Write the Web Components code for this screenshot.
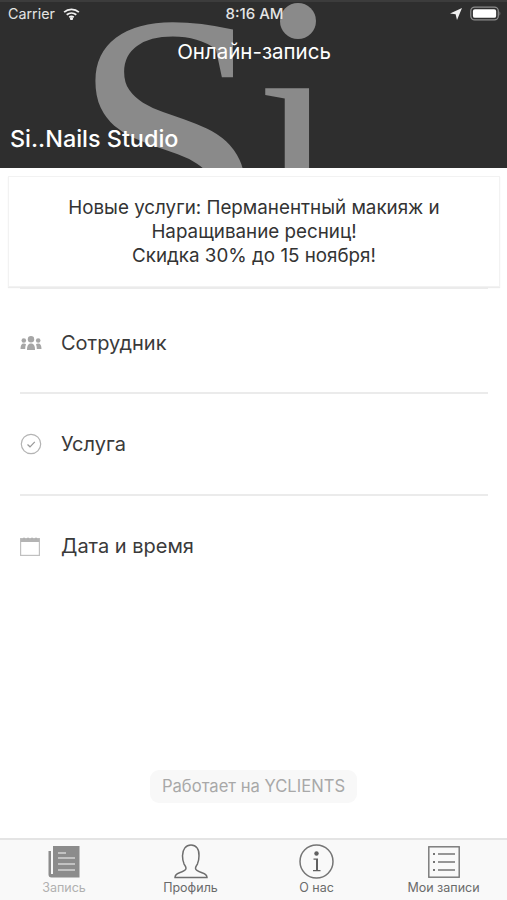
<!DOCTYPE html>
<html lang="ru">
<head>
<meta charset="utf-8">
<title>Онлайн-запись</title>
<style>
    html, body { margin: 0; padding: 0; background: #fff; }
    body { font-family: Inter, "Liberation Sans", Arial, sans-serif; }
    si-app { height: 900px; }
</style>
</head>
<body>
<si-app>
    <si-header title="Онлайн-запись" brand="Si..Nails Studio"></si-header>
    <si-notice>Новые услуги: Перманентный макияж и<br>Наращивание ресниц!<br>Скидка 30% до 15 ноября!</si-notice>
    <si-row first>
        <svg slot="icon" width="22" height="16" viewBox="0 0 22 16" fill="#a6a6a6">
            <circle cx="11" cy="4.2" r="3.2"/><path d="M7 15c0-4 1-6.500 4-6.500s4 2.500 4 6.500z"/>
            <circle cx="3.800" cy="5.500" r="2.300"/><path d="M.5 14c0-3.500 1-5.500 3.300-5.500 1 0 1.700.3 2.200.8C5.400 10.700 5.200 12.200 5.200 14z"/>
            <circle cx="18.200" cy="5.500" r="2.300"/><path d="M21.500 14c0-3.500-1-5.500-3.300-5.500-1 0-1.700.3-2.200.8.6 1.400.8 2.900.8 4.700z"/>
        </svg>
        Сотрудник
    </si-row>
    <si-row>
        <svg slot="icon" width="22" height="22" viewBox="0 0 22 22" fill="none" stroke="#b4b4b4">
            <circle cx="11" cy="11" r="9.700" stroke-width="1.200"/>
            <path d="M7.500 11.500l2.500 2.300 4.800-5" stroke="#999" stroke-width="1.200"/>
        </svg>
        Услуга
    </si-row>
    <si-row>
        <svg slot="icon" width="20" height="19" viewBox="0 0 20 19" fill="none">
            <rect x=".6" y="1.600" width="18.800" height="16.800" stroke="#c0c0c0" stroke-width="1.200"/>
            <rect x=".6" y="1.600" width="18.800" height="3.400" fill="#b4b4b4"/>
            <path d="M4 .5v2M8 .5v2M12 .5v2M16 .5v2" stroke="#a8a8a8"/>
        </svg>
        Дата и время
    </si-row>
    <si-credit>Работает на YCLIENTS</si-credit>
    <si-tab-bar>
        <si-tab label="Запись" muted>
            <svg width="32" height="33" viewBox="0 0 32 33">
                <path d="M5 1h26.500v31.500H3.500A3 3 0 0 1 .5 29.500V6H3v23h2z" fill="#8c8c8c"/>
                <path d="M10 8h8M10 13h17M10 19h17M10 25h17" stroke="#d4d4d4" stroke-width="1.500"/>
            </svg>
        </si-tab>
        <si-tab label="Профиль">
            <svg width="34" height="35" viewBox="0 0 34 35" fill="none" stroke="#6e6e6e" stroke-width="1.500">
                <path d="M1 33.500h32c0-2.500-2-3.700-5-4.700-4-1.300-6.500-2.500-6.500-4.500 0-1.500 1-2.500 2-4.500 1-2.200 1.500-5 1.500-8C25.500 5 22 1 17 1S8.500 5 8.500 11.800c0 3 .5 5.800 1.500 8 1 2 2 3 2 4.500 0 2-2.500 3.200-6.500 4.500-3 1-4.500 2.200-4.500 4.700z"/>
            </svg>
        </si-tab>
        <si-tab label="О нас">
            <svg width="35" height="35" viewBox="0 0 35 35" fill="none">
                <circle cx="17.500" cy="17.500" r="16.500" stroke="#757575" stroke-width="1.500"/>
                <circle cx="17.500" cy="9.500" r="2.200" fill="#606060"/>
                <path d="M14.500 14.500h4.500v11.500h2.500v1.200h-7.500V26H17V15.700h-2.500z" fill="#606060"/>
            </svg>
        </si-tab>
        <si-tab label="Мои записи">
            <svg width="32" height="32" viewBox="0 0 32 32" fill="none" stroke="#757575" stroke-width="1.400">
                <rect x=".8" y=".8" width="30.400" height="30.400"/>
                <path d="M10 8h17M10 16h17M10 24h17"/>
                <path d="M5 8h2M5 16h2M5 24h2" stroke-width="2"/>
            </svg>
        </si-tab>
    </si-tab-bar>
</si-app>

<script>
(function() {
    class SiApp extends HTMLElement {
        constructor() {
            super();
            this.attachShadow({ mode: 'open' }).innerHTML = `
                <style>
                    :host { display: flex; flex-direction: column; width: 507px; overflow: hidden; background: #fff; }
                </style>
                <slot></slot>`;
        }
    }

    class SiStatusBar extends HTMLElement {
        constructor() {
            super();
            this.attachShadow({ mode: 'open' }).innerHTML = `
                <style>
                    :host {
                        display: grid;
                        grid-template-columns: 1fr auto 1fr;
                        align-items: center;
                        height: 23px;
                        padding: 0 6px 0 8px;
                        color: #e4e4e4;
                        font-size: 14.300px;
                    }
                    .left, .right { display: flex; align-items: center; }
                    .left { gap: 8px; }
                    .right { justify-content: flex-end; gap: 8px; }
                    .time { font-size: 15px; font-weight: 500; }
                </style>
                <div class="left">
                    <span>Carrier</span>
                    <svg width="17" height="12" viewBox="0 0 18 13" fill="none" stroke="#f0f0f0" stroke-width="1.900">
                        <path d="M1 4.500C5.500.5 12.500.5 17 4.500M3.800 7.300c3-2.500 7.400-2.500 10.400 0M6.500 10c1.500-1 3.500-1 5 0"/>
                        <circle cx="9" cy="11.500" r=".8" fill="#f0f0f0"/>
                    </svg>
                </div>
                <span class="time">8:16 AM</span>
                <div class="right">
                    <svg width="12" height="12" viewBox="0 0 12 12"><path d="M12 0L0 5.500l5.600.8L7 12z" fill="#f0f0f0"/></svg>
                    <svg width="31" height="15" viewBox="0 0 32 15" fill="none">
                        <rect x=".8" y=".8" width="28.400" height="13.400" rx="4" stroke="#8c8c8c" stroke-width="1.300"/>
                        <rect x="3" y="3" width="24" height="9" rx="2" fill="#fff"/>
                        <path d="M30.500 5.500c1 .3 1 3.700 0 4z" fill="#8c8c8c"/>
                    </svg>
                </div>`;
        }
    }

    class SiHeader extends HTMLElement {
        constructor() {
            super();
            this.attachShadow({ mode: 'open' }).innerHTML = `
                <style>
                    :host {
                        display: flex;
                        flex-direction: column;
                        position: relative;
                        height: 168px;
                        box-sizing: border-box;
                        background: #2e2e2e;
                        color: #fff;
                        overflow: hidden;
                        border-top: 2px solid #3c3c3c;
                    }
                    .mark {
                        position: absolute;
                        font-family: "Liberation Serif", serif;
                        line-height: 1;
                        color: #8a8a8a;
                    }
                    .s { left: 72px; top: -41px; font-size: 350px; }
                    .i { left: 255px; top: -27px; font-size: 300px; }
                    /* logo dot is bigger than the font's, so it sits over a dotless i */
                    .dot { position: absolute; left: 280px; top: 1px; width: 36px; height: 36px; border-radius: 50%; background: #8a8a8a; }
                    si-status-bar, .title, .brand { position: relative; }
                    .title { margin-top: 13px; padding-left: 1px; text-align: center; font-size: 20.500px; line-height: 28px; }
                    .brand { margin: auto 0 15px 10px; font-size: 23.400px; line-height: 28px; font-weight: 500; }
                </style>
                <div class="mark s">S</div>
                <div class="mark i">ı</div>
                <div class="dot"></div>
                <si-status-bar></si-status-bar>
                <div class="title"></div>
                <div class="brand"></div>`;
        }

        connectedCallback() {
            this.shadowRoot.querySelector('.title').textContent = this.getAttribute('title');
            this.shadowRoot.querySelector('.brand').textContent = this.getAttribute('brand');
        }
    }

    class SiNotice extends HTMLElement {
        constructor() {
            super();
            this.attachShadow({ mode: 'open' }).innerHTML = `
                <style>
                    :host {
                        display: block;
                        margin: 8px 7px 0 8px;
                        padding: 19px 0 18px;
                        border: 1px solid #f2f2f2;
                        box-shadow: 0 1px 1px #ececec;
                        text-align: center;
                        color: #333;
                        font-size: 18.800px;
                        line-height: 24px;
                    }
                </style>
                <slot></slot>`;
        }
    }

    class SiRow extends HTMLElement {
        constructor() {
            super();
            this.attachShadow({ mode: 'open' }).innerHTML = `
                <style>
                    :host {
                        display: flex;
                        align-items: center;
                        height: 100px;
                        margin: 0 19px 0 20px;
                        border-top: 2px solid #ebebeb;
                        color: #3a3a3a;
                        font-size: 20px;
                    }
                    :host([first]) { height: 99px; padding-top: 4px; }
                    .icon { display: flex; width: 41px; flex: none; }
                </style>
                <div class="icon"><slot name="icon"></slot></div>
                <slot></slot>`;
        }
    }

    class SiCredit extends HTMLElement {
        constructor() {
            super();
            this.attachShadow({ mode: 'open' }).innerHTML = `
                <style>
                    :host {
                        display: block;
                        align-self: center;
                        margin-top: auto;
                        margin-bottom: 35px;
                        padding: 0 12px;
                        border-radius: 9px;
                        background: #f8f8f8;
                        color: #a8a8a8;
                        font-size: 16.600px;
                        line-height: 33px;
                    }
                </style>
                <slot></slot>`;
        }
    }

    class SiTabBar extends HTMLElement {
        constructor() {
            super();
            this.attachShadow({ mode: 'open' }).innerHTML = `
                <style>
                    :host {
                        display: grid;
                        grid-template-columns: 128px 125px 127px 127px;
                        height: 60px;
                        border-top: 2px solid #e4e4e4;
                        background: #f9f9f9;
                    }
                </style>
                <slot></slot>`;
        }
    }

    class SiTab extends HTMLElement {
        constructor() {
            super();
            this.attachShadow({ mode: 'open' }).innerHTML = `
                <style>
                    :host {
                        display: flex;
                        flex-direction: column;
                        align-items: center;
                        padding-top: 4px;
                        color: #6a6a6a;
                        font-size: 12.500px;
                    }
                    :host([muted]) { color: #b0b0b0; }
                    .icon { display: flex; height: 35px; align-items: center; }
                    .label { margin-top: 1px; line-height: 15px; }
                </style>
                <div class="icon"><slot></slot></div>
                <div class="label"></div>`;
        }

        connectedCallback() {
            this.shadowRoot.querySelector('.label').textContent = this.getAttribute('label');
        }
    }

    customElements.define('si-app', SiApp);
    customElements.define('si-status-bar', SiStatusBar);
    customElements.define('si-header', SiHeader);
    customElements.define('si-notice', SiNotice);
    customElements.define('si-row', SiRow);
    customElements.define('si-credit', SiCredit);
    customElements.define('si-tab-bar', SiTabBar);
    customElements.define('si-tab', SiTab);
})();
</script>
</body>
</html>
